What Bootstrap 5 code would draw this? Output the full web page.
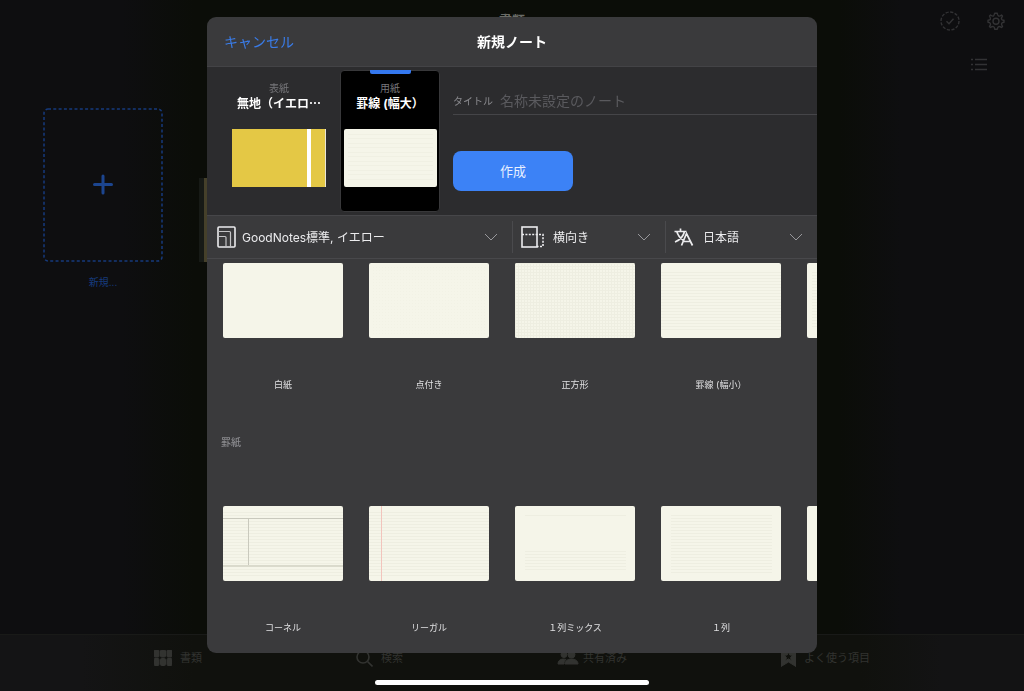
<!DOCTYPE html>
<html lang="ja">
<head>
<meta charset="utf-8">
<meta name="viewport" content="width=device-width, initial-scale=1">
<title>新規ノート</title>
<link href="https://cdn.jsdelivr.net/npm/bootstrap@5.3.0/dist/css/bootstrap.min.css" rel="stylesheet">
<style>
  body {
    font-family: Inter, "Noto Sans CJK JP", sans-serif;
    font-size: 12px;
    line-height: 16px;
    color: #fff;
    background: linear-gradient(90deg, #0e0e10 0, #0e0e10 12%, #0b0d08 19%, #0b0d08 82%, #0e0e10 88%);
    overflow: hidden;
  }
  svg { display: block; fill: none; stroke: currentColor; flex: none; }
  button { border: 0; background: none; color: inherit; padding: 0; }

  /* library behind the dialog */
  .library-head { color: #323234; padding: 11px 19px 0 0; }
  .library-title { color: #6a6b66; font-size: 13px; font-weight: 700; padding-top: 4px; }
  .library-tools { gap: 27px; }
  .library-shelf { padding: 35px 43px 0; gap: 36px; }
  .new-tile { width: 120px; color: #163a7c; font-size: 10px; line-height: 16px; }
  .book-peek { width: 12px; height: 84px; margin-top: 70px; background: #171a16; border-right: 7px solid #45402a; }
  .tabs-bar { height: 57px; color: #323330; font-size: 11px; border-top: 1px solid #191a18;
    background: linear-gradient(90deg, #141415 0, #141415 8%, #10110d 19%, #10110d 84%, #131314 92%); }
  .tabs-bar a { color: inherit; height: 46px; text-decoration: none; }

  /* dialog */
  .sheet-layer { padding-top: 17px; }
  .sheet { width: 610px; height: 636px; max-width: 100%; background: #3a3a3c; border-radius: 9px; overflow: hidden; }
  .sheet-head { height: 50px; font-size: 14px; border-bottom: 1px solid #434346; padding: 0 17px; }
  .sheet-head button { color: #3a7ce8; }
  .setup { height: 149px; background: #2c2c2e; border-bottom: 1px solid #464649; padding: 3px 0 4px 22px; gap: 11px; }
  .part { width: 100px; height: 142px; padding-top: 9px; border: 1px solid transparent; border-radius: 4px; }
  .part.active { background: #000; border-color: #38383a; }
  .part.active::before { content: ""; position: absolute; top: -1px; left: 29px; width: 41px; height: 4px; border-radius: 0 0 2px 2px; background: #3478f0; }
  .part-kind { font-size: 10px; color: #77777b; }
  .part-name { font-weight: 700; }
  .cover { width: 94px; height: 58px; margin-top: 17px; background: linear-gradient(90deg, #e4c845 75px, #fff 75px, #fff 79px, #e4c845 79px); border-right: 1px solid #e9e6d8; }
  .preview { width: 93px; height: 58px; margin-top: 17px; border-radius: 2px; background: #f5f5e9; }
  .setup-form { padding-left: 2px; }
  .title-row { height: 29px; margin-top: 16px; padding-top: 2px; border-bottom: 1px solid #454548; }
  .title-row label { font-size: 10px; color: #8a8a8e; width: 47px; }
  .title-row input { font-size: 14px; color: #fff; background: none; border: 0; outline: 0; padding: 0; min-width: 0; }
  .title-row input::placeholder { color: #5a5a5e; }
  .create { width: 120px; height: 40px; margin-top: 36px; border-radius: 8px; background: #3c82f6; color: #e8f0ff; font-size: 13px; }
  .filters { height: 43px; border-bottom: 1px solid #48484b; color: #ececee; }
  .filter { padding-right: 14px; }
  .filter + .filter { border-left: 1px solid #4a4a4d; height: 32px; }
  .filter select { appearance: none; background: none; border: 0; outline: 0; color: inherit; padding: 2px 0 0; min-width: 0; }
  .filter .chev { color: #98989c; }
  .f-size { width: 305px; padding-left: 10px; gap: 6px; }
  .f-dir { width: 153px; padding-left: 8px; gap: 8px; }
  .f-lang { padding-left: 8px; gap: 9px; }
  .papers { padding-left: 16px; gap: 26px; }
  .paper { width: 120px; font-size: 9px; color: #e0e0e2; }
  .paper svg { width: 120px; height: 75px; border-radius: 2px; background: #f5f5e9; margin-bottom: 39px; }
  .group-name { font-size: 10px; color: #8a8a8e; padding-left: 14px; margin: 42px 0 56px; }
  .home-bar { bottom: 6px; width: 274px; height: 5px; border-radius: 3px; background: #fff; }
</style>
</head>
<body>
<div class="d-flex flex-column vh-100">
  <header class="library-head position-relative">
    <div class="library-title text-center position-absolute top-0 start-0 end-0 mt-2">書類</div>
    <div class="library-tools d-flex justify-content-end position-relative">
      <button aria-label="選択"><svg width="20" height="20" viewBox="0 0 20 20" stroke-width="1.4"><circle cx="10" cy="10" r="9" stroke-dasharray="3.2 1.5"/><path d="M6.5 10.2l2.5 2.5 4.5-5"/></svg></button>
      <button aria-label="設定"><svg width="18" height="20" viewBox="0 0 18 20" stroke-width="1.4" stroke-linejoin="round"><path d="M7.7 2.2h2.600Q10.400 4.500 11.600 5T14.500 4l1 1Q14 7 14.600 8.300T17 9.200v2Q15 11.500 14.600 12.500T15.500 15.500l-1 1Q12.500 15.200 11.600 15.600T10.300 18.200H7.700Q7.600 16 6.400 15.600T3.500 16.500l-1-1Q4 13.500 3.400 12.500T1 11.200v-2Q3 9 3.400 8.300T2.500 5l1-1Q5.500 5.400 6.400 5T7.700 2.200z"/><circle cx="9" cy="10.200" r="3"/></svg></button>
    </div>
    <div class="d-flex justify-content-end mt-4"><button class="me-3" aria-label="リスト表示"><svg width="19" height="18" viewBox="0 0 19 18" stroke-width="1.4" stroke="#4c4c4e"><path d="M1 4.500h2M5 4.500h12M1 9.500h2M5 9.500h12M1 14.500h2M5 14.500h12"/></svg></button></div>
  </header>
  <main class="library-shelf d-flex flex-grow-1">
    <div>
      <button class="new-tile">
        <svg width="120" height="154" viewBox="0 0 120 154"><rect x="1" y="1" width="118" height="152" rx="4" stroke-width="1.5" stroke-dasharray="3 2.3"/><path d="M60 68v17M51.5 76.5h17" stroke-width="3" stroke-linecap="round" stroke="#1c458f"/></svg>
        <span class="d-block pt-2 mt-1">新規...</span>
      </button>
    </div>
    <div class="book-peek"></div>
  </main>
  <nav class="tabs-bar">
    <div class="d-flex justify-content-evenly">
      <a href="#" class="d-flex align-items-center gap-2"><svg width="18" height="16" viewBox="0 0 18 16" stroke="none"><g fill="currentColor"><rect width="5" height="7" rx="1"/><rect x="6.5" width="5" height="7" rx="1"/><rect x="13" width="5" height="7" rx="1"/><rect y="8.5" width="5" height="7" rx="1"/><rect x="6.5" y="8.5" width="5" height="7" rx="1"/><rect x="13" y="8.5" width="5" height="7" rx="1"/></g></svg>書類</a>
      <a href="#" class="d-flex align-items-center gap-2"><svg width="17" height="17" viewBox="0 0 17 17" stroke-width="1.6"><circle cx="7" cy="7" r="6"/><path d="M11.500 11.500l5 5"/></svg>検索</a>
      <a href="#" class="d-flex align-items-center gap-1"><svg width="22" height="16" viewBox="0 0 22 16" stroke="none"><g fill="currentColor"><circle cx="7" cy="4.500" r="3"/><circle cx="14.500" cy="4.500" r="3.500"/><path d="M1 14c0-3 2-5 5.500-5 1 0 2 .2 2.500.6C7.500 11 7 12 7 14zM8 14c0-3 2.500-5 6.500-5s6.500 2 6.500 5z"/></g></svg>共有済み</a>
      <a href="#" class="d-flex align-items-center gap-2"><svg width="15" height="18" viewBox="0 0 15 18" stroke="none"><path fill="currentColor" fill-rule="evenodd" d="M0 2h15v15.500L7.500 13 0 17.500zM7.500 3L6.200 6l-3.200.3 2.400 2.100-.7 3.200 2.800-1.700 2.800 1.700-.7-3.200L12 6.300 8.800 6z"/></svg>よく使う項目</a>
    </div>
  </nav>
</div>

<div class="sheet-layer position-fixed top-0 start-0 end-0 d-flex justify-content-center">
  <section class="sheet" role="dialog" aria-label="新規ノート">
    <header class="sheet-head d-flex align-items-center">
      <div class="flex-fill w-25"><button>キャンセル</button></div>
      <div class="fw-bold">新規ノート</div>
      <div class="flex-fill w-25"></div>
    </header>
    <div class="setup d-flex">
      <button class="part flex-shrink-0 d-flex flex-column align-items-center">
        <span class="part-kind">表紙</span><span class="part-name">無地（イエロ⋯</span><span class="cover"></span>
      </button>
      <button class="part active flex-shrink-0 position-relative d-flex flex-column align-items-center">
        <span class="part-kind">用紙</span><span class="part-name">罫線 (幅大）</span>
        <svg class="preview" viewBox="0 0 93 58"><path stroke="#f0f0e3" d="M4 5.500h85M4 9.500h85M4 14.500h85M4 18.500h85M4 23.500h85M4 27.500h85M4 32.500h85M4 36.500h85M4 41.500h85M4 45.500h85M4 50.500h85"/></svg>
      </button>
      <form class="setup-form flex-grow-1">
        <div class="title-row d-flex align-items-center"><label for="noteTitle">タイトル</label><input id="noteTitle" class="flex-grow-1" type="text" placeholder="名称未設定のノート"></div>
        <button class="create" type="button">作成</button>
      </form>
    </div>
    <div class="filters d-flex align-items-center">
      <div class="filter f-size d-flex align-items-center">
        <svg width="19" height="22" viewBox="0 0 19 22"><rect x="1" y="1" width="17" height="20" rx="1" stroke-width="1.6"/><path stroke="#c4c4c6" stroke-width="1.2" d="M1 5.500h11.500a1 1 0 0 1 1 1V21M1 10.500h7a1 1 0 0 1 1 1V21"/></svg>
        <select class="flex-grow-1" aria-label="サイズとカラー"><option>GoodNotes標準, イエロー</option></select>
        <svg class="chev" width="14" height="8" viewBox="0 0 14 8"><path d="M1 1l6 6 6-6"/></svg>
      </div>
      <div class="filter f-dir d-flex align-items-center">
        <svg width="24" height="22" viewBox="0 0 24 22" stroke-width="1.6"><rect x="1" y="1" width="15" height="20"/><path stroke-dasharray="2 1.4" d="M1 8.500h21V20.500H16"/></svg>
        <select class="flex-grow-1" aria-label="向き"><option>横向き</option></select>
        <svg class="chev" width="14" height="8" viewBox="0 0 14 8"><path d="M1 1l6 6 6-6"/></svg>
      </div>
      <div class="filter f-lang d-flex align-items-center flex-grow-1">
        <svg width="20" height="20" viewBox="0 0 20 20" stroke-width="1.7"><path d="M.5 4.500h12M6.500 1.500v3M10.500 4.500C9.500 9 6 13 1 15M2.800 4.500C4 8.500 6 11 9 13M7.500 18.500l5-12 6 12M9.500 14.500h7"/></svg>
        <select class="flex-grow-1" aria-label="言語"><option>日本語</option></select>
        <svg class="chev" width="14" height="8" viewBox="0 0 14 8"><path d="M1 1l6 6 6-6"/></svg>
      </div>
    </div>

    <svg width="0" height="0" class="position-absolute" aria-hidden="true"><defs>
      <pattern id="dots" width="3" height="3" patternUnits="userSpaceOnUse"><rect x="1" y="1" width="1" height="1" fill="#f2f2e5" stroke="none"/></pattern>
      <pattern id="squares" width="3" height="3" patternUnits="userSpaceOnUse"><path d="M0 .5h3M.5 0v3" stroke="#eeeee1"/></pattern>
      <pattern id="rules" width="6" height="3" patternUnits="userSpaceOnUse"><path d="M0 .5h6" stroke="#eeeee1"/></pattern>
    </defs></svg>

    <div class="papers d-flex pt-1">
      <div class="paper flex-shrink-0 text-center"><svg></svg>白紙</div>
      <div class="paper flex-shrink-0 text-center"><svg><rect x="3" y="3" width="114" height="69" fill="url(#dots)" stroke="none"/></svg>点付き</div>
      <div class="paper flex-shrink-0 text-center"><svg><rect width="120" height="75" fill="url(#squares)" stroke="none"/></svg>正方形</div>
      <div class="paper flex-shrink-0 text-center"><svg><rect y="9" width="120" height="60" fill="url(#rules)" stroke="none"/></svg>罫線 (幅小）</div>
      <div class="paper flex-shrink-0 text-center"><svg><rect x="5" y="9" width="110" height="56" fill="url(#rules)" stroke="none"/></svg></div>
    </div>
    <h2 class="group-name lh-base">罫紙</h2>
    <div class="papers d-flex">
      <div class="paper flex-shrink-0 text-center"><svg><rect y="6" width="120" height="66" fill="url(#rules)" stroke="none"/><path stroke="#c9c9bd" d="M0 12.500h120M25.500 12v48"/><path stroke="#dadacc" stroke-width="2" d="M0 60h120"/></svg>コーネル</div>
      <div class="paper flex-shrink-0 text-center"><svg><rect y="6" width="120" height="66" fill="url(#rules)" stroke="none"/><path stroke="#f2c4bc" d="M12.500 0v75"/></svg>リーガル</div>
      <div class="paper flex-shrink-0 text-center"><svg><path stroke="#eeeee1" d="M10 9.500h101"/><rect x="10" y="45" width="101" height="20" fill="url(#rules)" stroke="none"/></svg>１列ミックス</div>
      <div class="paper flex-shrink-0 text-center"><svg><rect x="10" y="9" width="101" height="60" fill="url(#rules)" stroke="none"/></svg>１列</div>
      <div class="paper flex-shrink-0 text-center"><svg><rect x="10" y="9" width="101" height="60" fill="url(#rules)" stroke="none"/></svg></div>
    </div>
  </section>
</div>
<div class="home-bar position-fixed start-50 translate-middle-x"></div>
<script src="https://cdn.jsdelivr.net/npm/bootstrap@5.3.0/dist/js/bootstrap.bundle.min.js"></script>
</body>
</html>
